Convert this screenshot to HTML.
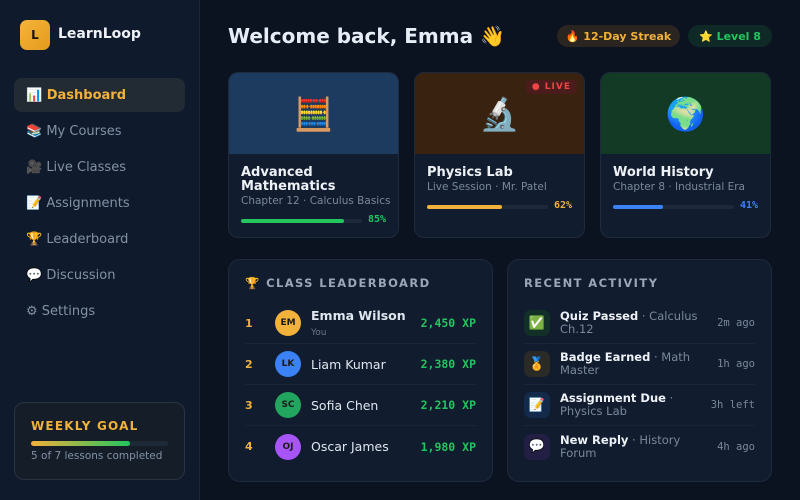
<!DOCTYPE html>
<html><head><meta charset="utf-8"><style>
*{box-sizing:border-box;margin:0;padding:0}
body{width:800px;height:500px;overflow:hidden;background:#0b1220;font-family:"DejaVu Sans","Liberation Sans",sans-serif;color:#e6edf6;position:relative}
.sb{position:absolute;left:0;top:0;width:200px;height:500px;background:#0f1b2d;border-right:1px solid #1b2738}
.logo{position:absolute;left:20px;top:20px;width:30px;height:30px;border-radius:7px;background:linear-gradient(135deg,#f5b43a,#e49a1c);color:#1a1206;font-weight:bold;font-size:12px;display:flex;align-items:center;justify-content:center}
.brand{position:absolute;left:58px;top:26px;font-size:14px;font-weight:bold;color:#eef2f7}
.nav{position:absolute;left:14px;width:171px;height:34px;padding-left:12px;display:flex;align-items:center;font-size:13px;color:#8391a5;border-radius:8px}
.nav.act{background:#222a34;color:#f2b13a;font-weight:bold}
.goal{position:absolute;left:14px;top:402px;width:171px;height:78px;border:1px solid #2a3340;border-radius:10px;background:#151e28;padding:16px 16px}
.goal h4{font-size:12px;color:#f2b13a;letter-spacing:1.2px}
.gbar{margin-top:8px;height:5px;background:#1e2a38;border-radius:3px}
.gbar div{width:72%;height:5px;border-radius:3px;background:linear-gradient(90deg,#f2b13a,#22c55e)}
.goal p{font-size:10.5px;color:#8391a5;margin-top:4px}
h1{position:absolute;left:228px;top:24px;font-size:20px;font-weight:bold;color:#e6edf6}
.pill{position:absolute;top:25px;height:22px;border-radius:11px;font-size:11px;font-weight:bold;display:flex;align-items:center;justify-content:center}
.card{position:absolute;top:72px;width:171px;height:166px;border:1px solid #1e2b3d;border-radius:10px;background:#111c2e;overflow:hidden}
.ban{height:81px;display:flex;align-items:center;justify-content:center;font-size:32px;position:relative}
.ct{position:absolute;left:12px;top:93px;font-size:13px;font-weight:bold;line-height:14px;color:#eef2f7}
.cs{position:absolute;left:12px;font-size:10.5px;color:#7a889c}
.bar{position:absolute;left:12px;width:121px;height:4px;border-radius:2px;background:#1e2a3a}
.bar div{height:4px;border-radius:2px}
.pct{position:absolute;right:12px;font-size:10px;font-weight:bold;font-family:"DejaVu Sans Mono",monospace}
.panel{position:absolute;top:259px;height:223px;border:1px solid #1e2b3d;border-radius:12px;background:#111c2e}
.ph{position:absolute;left:16px;top:16px;font-size:11.5px;font-weight:bold;letter-spacing:1.4px;color:#9aa7b8}
.row{position:absolute;left:16px;right:16px;height:41px;border-bottom:1px solid #1a2536;display:flex;align-items:center}
.rk{width:30px;font-size:11px;font-weight:bold;color:#f2b13a}
.av{width:26px;height:26px;border-radius:13px;font-size:9px;font-weight:bold;display:flex;align-items:center;justify-content:center;color:#1a1a1a;margin-right:10px}
.nm{flex:1;font-size:12.5px;color:#dfe6ef}
.xp{font-family:"DejaVu Sans Mono",monospace;font-size:11.5px;font-weight:bold;color:#22c55e}
.ic{width:26px;height:26px;border-radius:7px;display:flex;align-items:center;justify-content:center;font-size:13px;margin-right:10px;flex:none}
.at{flex:1;font-size:11.5px;line-height:13px;color:#7a889c}
.at b{color:#eef2f7}
.tm{font-family:"DejaVu Sans Mono",monospace;font-size:10.5px;color:#7a889c;width:50px;text-align:right}
</style></head><body>
<div class="sb">
<div class="logo">L</div><div class="brand">LearnLoop</div>
<div class="nav act" style="top:78px">📊&nbsp;Dashboard</div>
<div class="nav" style="top:114px">📚&nbsp;My Courses</div>
<div class="nav" style="top:150px">🎥&nbsp;Live Classes</div>
<div class="nav" style="top:186px">📝&nbsp;Assignments</div>
<div class="nav" style="top:222px">🏆&nbsp;Leaderboard</div>
<div class="nav" style="top:258px">💬&nbsp;Discussion</div>
<div class="nav" style="top:294px">⚙&nbsp;Settings</div>
<div class="goal"><h4>WEEKLY GOAL</h4><div class="gbar"><div></div></div><p>5 of 7 lessons completed</p></div>
</div>
<h1>Welcome back, Emma 👋</h1>
<div class="pill" style="left:557px;width:123px;background:#2a2520;color:#f2b13a">🔥 12-Day Streak</div>
<div class="pill" style="left:688px;width:84px;background:#0f2a26;color:#22c55e">⭐ Level 8</div>

<div class="card" style="left:228px"><div class="ban" style="background:#1d3a5f">🧮</div>
<div class="ct">Advanced<br>Mathematics</div><div class="cs" style="top:122px">Chapter 12 · Calculus Basics</div>
<div class="bar" style="top:146px"><div style="width:85%;background:#22c55e"></div></div><div class="pct" style="top:141px;color:#22c55e">85%</div></div>

<div class="card" style="left:414px"><div class="ban" style="background:#3a2210">🔬<div style="position:absolute;right:7px;top:7px;background:#4a1c1c;color:#ef4444;font-size:9px;font-weight:bold;letter-spacing:1px;padding:2px 6px;border-radius:4px">● LIVE</div></div>
<div class="ct">Physics Lab</div><div class="cs" style="top:108px">Live Session · Mr. Patel</div>
<div class="bar" style="top:132px"><div style="width:62%;background:#f2b13a"></div></div><div class="pct" style="top:127px;color:#f2b13a">62%</div></div>

<div class="card" style="left:600px"><div class="ban" style="background:#123a24">🌍</div>
<div class="ct">World History</div><div class="cs" style="top:108px">Chapter 8 · Industrial Era</div>
<div class="bar" style="top:132px"><div style="width:41%;background:#3b82f6"></div></div><div class="pct" style="top:127px;color:#3b82f6">41%</div></div>

<div class="panel" style="left:228px;width:265px"><div class="ph">🏆 CLASS LEADERBOARD</div>
<div class="row" style="top:43px"><div class="rk">1</div><div class="av" style="background:#f2b13a">EM</div><div class="nm"><b>Emma Wilson</b><br><span style="font-size:9px;color:#6b788b">You</span></div><div class="xp">2,450 XP</div></div>
<div class="row" style="top:84px"><div class="rk">2</div><div class="av" style="background:#3b82f6">LK</div><div class="nm">Liam Kumar</div><div class="xp">2,380 XP</div></div>
<div class="row" style="top:125px"><div class="rk">3</div><div class="av" style="background:#22a55e">SC</div><div class="nm">Sofia Chen</div><div class="xp">2,210 XP</div></div>
<div class="row" style="top:166px;border:none"><div class="rk">4</div><div class="av" style="background:#a855f7">OJ</div><div class="nm">Oscar James</div><div class="xp">1,980 XP</div></div>
</div>

<div class="panel" style="left:507px;width:265px"><div class="ph">RECENT ACTIVITY</div>
<div class="row" style="top:43px"><div class="ic" style="background:#123028">✅</div><div class="at"><b>Quiz Passed</b> · Calculus Ch.12</div><div class="tm">2m ago</div></div>
<div class="row" style="top:84px"><div class="ic" style="background:#2a2a26">🏅</div><div class="at"><b>Badge Earned</b> · Math Master</div><div class="tm">1h ago</div></div>
<div class="row" style="top:125px"><div class="ic" style="background:#142a4a">📝</div><div class="at"><b>Assignment Due</b> · Physics Lab</div><div class="tm">3h left</div></div>
<div class="row" style="top:166px;border:none"><div class="ic" style="background:#221e44">💬</div><div class="at"><b>New Reply</b> · History Forum</div><div class="tm">4h ago</div></div>
</div>
</body></html>
